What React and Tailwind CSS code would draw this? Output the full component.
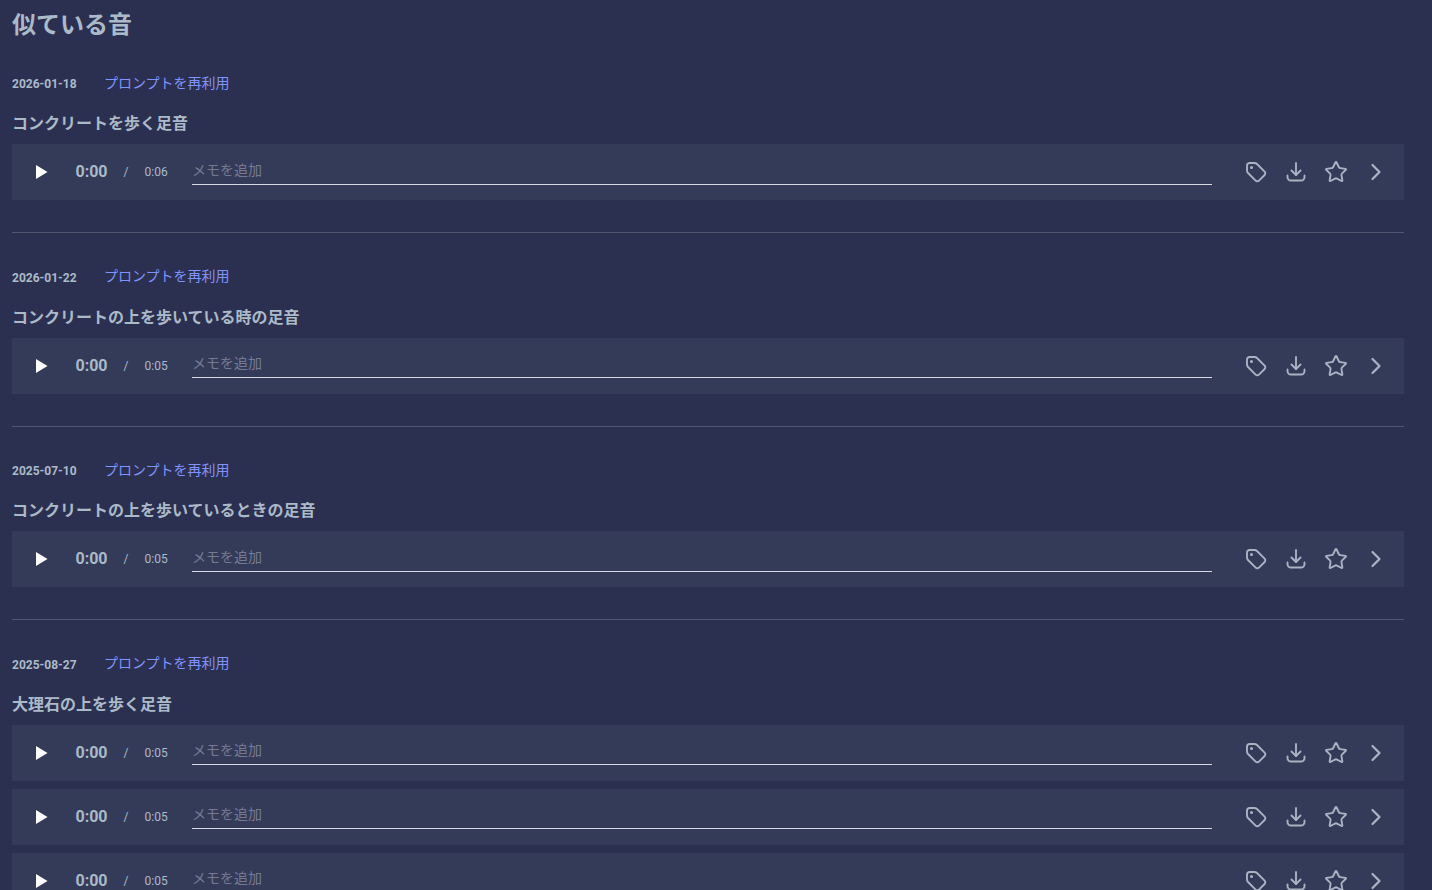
import React from 'react';
import { Star, ChevronRight } from 'lucide-react';

const FONT = 'font-[Roboto,"Noto_Sans_CJK_JP",sans-serif]';

function Row({ dur }) {
  return (
    <div className="flex h-14 items-center bg-[#343b59] pl-[20px] pr-[8px]">
      <svg width="18" height="18" viewBox="0 0 18 18" className="shrink-0 text-white">
        <path d="M4 2 L15.5 9 L4 16 Z" fill="currentColor" />
      </svg>
      <span className="ml-[25.5px] w-[33px] text-[16px] leading-5 font-bold text-[#abbac8]">0:00</span>
      <span className="ml-[15px] w-[5px] text-[12px] text-[#abbac8]">/</span>
      <span className="ml-[16px] w-[24px] text-[12px] text-[#abbac8]">{dur}</span>
      <div className="ml-[23.5px] -mt-[2px] h-[27px] flex-1 border-b border-[#d8dae2] text-[14px] leading-[24px] text-[#747a92]">メモを追加</div>
      <div className="ml-[24px] flex items-center text-[#a8b3c3]">
        <span className="flex h-10 w-10 items-center justify-center">
          <svg width="24" height="24" viewBox="0 0 24 24" fill="none" stroke="currentColor" strokeWidth="1.9" strokeLinecap="round" strokeLinejoin="round">
            <path d="M3 5.5A2.5 2.5 0 0 1 5.5 3h5a3.5 3.5 0 0 1 2.5 1l7.6 7.6a2.4 2.4 0 0 1 0 3.4l-5.6 5.6a2.4 2.4 0 0 1-3.4 0L4 13a3.5 3.5 0 0 1-1-2.5z" />
            <circle cx="7.5" cy="7.5" r="0.6" fill="currentColor" />
          </svg>
        </span>
        <span className="flex h-10 w-10 items-center justify-center">
          <svg width="24" height="24" viewBox="0 0 24 24" fill="none" stroke="currentColor" strokeWidth="1.9" strokeLinecap="round" strokeLinejoin="round">
            <path d="M12 3v12" />
            <path d="M7.5 10.5 12 15l4.5-4.5" />
            <path d="M3.5 15.5v1.5a3.5 3.5 0 0 0 3.5 3.5h10a3.5 3.5 0 0 0 3.5-3.5v-1.5" />
          </svg>
        </span>
        <span className="flex h-10 w-10 items-center justify-center"><Star size={24} strokeWidth={1.9} /></span>
        <span className="flex h-10 w-10 items-center justify-center"><ChevronRight size={28} strokeWidth={1.9} /></span>
      </div>
    </div>
  );
}

function Section({ date, title, rows, divider = true }) {
  return (
    <section>
      <div className="flex h-[23.5px] items-center">
        <span className="w-[92px] text-[12px] font-bold text-[#abbac8]">{date}</span>
        <span className="-mt-[2px] text-[14px] text-[#8093ff]">プロンプトを再利用</span>
      </div>
      <h3 className="mt-[16px] mb-[8px] h-[24px] text-[16px] leading-6 font-bold text-[#abbac8]">{title}</h3>
      <div className="flex flex-col gap-2">
        {rows.map((d, i) => <Row key={i} dur={d} />)}
      </div>
      {divider && <div className="mt-[32px] mb-[33px] h-px bg-[#52556f]" />}
    </section>
  );
}

export default function App() {
  return (
    <div className={`h-[890px] overflow-hidden bg-[#2c3050] pl-3 pr-7 ${FONT}`}>
      <h2 className="h-[72.5px] pt-[9px] text-[24px] leading-8 font-bold text-[#abbac8]">似ている音</h2>
      <Section date="2026-01-18" title="コンクリートを歩く足音" rows={['0:06']} />
      <Section date="2026-01-22" title="コンクリートの上を歩いている時の足音" rows={['0:05']} />
      <Section date="2025-07-10" title="コンクリートの上を歩いているときの足音" rows={['0:05']} />
      <Section date="2025-08-27" title="大理石の上を歩く足音" rows={['0:05', '0:05', '0:05']} divider={false} />
    </div>
  );
}
